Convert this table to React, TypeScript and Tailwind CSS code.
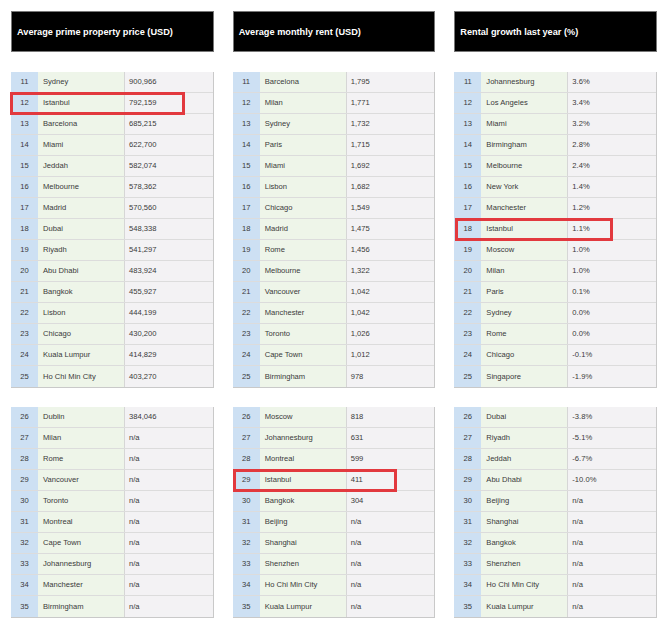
type Row = [number, string, string];

type Panel = {
  title: string;
  top: Row[];
  bottom: Row[];
  mark: { part: "top" | "bottom"; row: number; left: number; width: number };
};

const na = "n/a";

const panels: Panel[] = [
  {
    title: "Average prime property price (USD)",
    top: [
      [11, "Sydney", "900,966"],
      [12, "Istanbul", "792,159"],
      [13, "Barcelona", "685,215"],
      [14, "Miami", "622,700"],
      [15, "Jeddah", "582,074"],
      [16, "Melbourne", "578,362"],
      [17, "Madrid", "570,560"],
      [18, "Dubai", "548,338"],
      [19, "Riyadh", "541,297"],
      [20, "Abu Dhabi", "483,924"],
      [21, "Bangkok", "455,927"],
      [22, "Lisbon", "444,199"],
      [23, "Chicago", "430,200"],
      [24, "Kuala Lumpur", "414,829"],
      [25, "Ho Chi Min City", "403,270"],
    ],
    bottom: [
      [26, "Dublin", "384,046"],
      [27, "Milan", na],
      [28, "Rome", na],
      [29, "Vancouver", na],
      [30, "Toronto", na],
      [31, "Montreal", na],
      [32, "Cape Town", na],
      [33, "Johannesburg", na],
      [34, "Manchester", na],
      [35, "Birmingham", na],
    ],
    mark: { part: "top", row: 1, left: -1, width: 175 },
  },
  {
    title: "Average monthly rent (USD)",
    top: [
      [11, "Barcelona", "1,795"],
      [12, "Milan", "1,771"],
      [13, "Sydney", "1,732"],
      [14, "Paris", "1,715"],
      [15, "Miami", "1,692"],
      [16, "Lisbon", "1,682"],
      [17, "Chicago", "1,549"],
      [18, "Madrid", "1,475"],
      [19, "Rome", "1,456"],
      [20, "Melbourne", "1,322"],
      [21, "Vancouver", "1,042"],
      [22, "Manchester", "1,042"],
      [23, "Toronto", "1,026"],
      [24, "Cape Town", "1,012"],
      [25, "Birmingham", "978"],
    ],
    bottom: [
      [26, "Moscow", "818"],
      [27, "Johannesburg", "631"],
      [28, "Montreal", "599"],
      [29, "Istanbul", "411"],
      [30, "Bangkok", "304"],
      [31, "Beijing", na],
      [32, "Shanghai", na],
      [33, "Shenzhen", na],
      [34, "Ho Chi Min City", na],
      [35, "Kuala Lumpur", na],
    ],
    mark: { part: "bottom", row: 3, left: 0, width: 164 },
  },
  {
    title: "Rental growth last year (%)",
    top: [
      [11, "Johannesburg", "3.6%"],
      [12, "Los Angeles", "3.4%"],
      [13, "Miami", "3.2%"],
      [14, "Birmingham", "2.8%"],
      [15, "Melbourne", "2.4%"],
      [16, "New York", "1.4%"],
      [17, "Manchester", "1.2%"],
      [18, "Istanbul", "1.1%"],
      [19, "Moscow", "1.0%"],
      [20, "Milan", "1.0%"],
      [21, "Paris", "0.1%"],
      [22, "Sydney", "0.0%"],
      [23, "Rome", "0.0%"],
      [24, "Chicago", "-0.1%"],
      [25, "Singapore", "-1.9%"],
    ],
    bottom: [
      [26, "Dubai", "-3.8%"],
      [27, "Riyadh", "-5.1%"],
      [28, "Jeddah", "-6.7%"],
      [29, "Abu Dhabi", "-10.0%"],
      [30, "Beijing", na],
      [31, "Shanghai", na],
      [32, "Bangkok", na],
      [33, "Shenzhen", na],
      [34, "Ho Chi Min City", na],
      [35, "Kuala Lumpur", na],
    ],
    mark: { part: "top", row: 7, left: 1, width: 158 },
  },
];

const Table = ({
  rows,
  mark,
}: {
  rows: Row[];
  mark?: { row: number; left: number; width: number };
}) => {
  return (
    <div className="relative border-r border-b border-[#c9c9c9]">
      {rows.map(([n, city, value], i) => (
        <div
          key={n}
          className={`grid grid-cols-[27px_87px_1fr] h-[21px] ${
            i < rows.length - 1 ? "border-b border-[#dcdcdc]" : ""
          }`}
        >
          <div className="bg-[#cde0f3] flex items-center justify-center">{n}</div>
          <div className="bg-[#eef5e9] flex items-center pl-[5px] border-r border-[#d6d6d6]">
            {city}
          </div>
          <div className="bg-[#f3f2f4] flex items-center pl-[4px]">{value}</div>
        </div>
      ))}

      {/* highlight box */}
      {mark && (
        <div
          className="absolute h-[23px] border-[3px] border-[#e2393e]"
          style={{ top: mark.row * 21 - 1, left: mark.left, width: mark.width }}
        />
      )}
    </div>
  );
};

export default function App() {
  return (
    <div
      className="w-[670px] h-[628px] bg-white pl-[11px] pr-[13px] pt-[11px] grid grid-cols-3 gap-x-[19px] text-[7.6px] text-[#3a3a3a]"
      style={{ fontFamily: '"Liberation Sans", Arial, sans-serif' }}
    >
      {panels.map((p) => (
        <div key={p.title} className="flex flex-col">
          {/* Header */}
          <div className="h-[41px] bg-black border border-[#777] flex items-center px-[5px] pt-[2px] text-white font-bold text-[9.2px]">
            {p.title}
          </div>

          <div className="mt-[20px]">
            <Table rows={p.top} mark={p.mark.part === "top" ? p.mark : undefined} />
          </div>
          <div className="mt-[19px]">
            <Table rows={p.bottom} mark={p.mark.part === "bottom" ? p.mark : undefined} />
          </div>
        </div>
      ))}
    </div>
  );
}
